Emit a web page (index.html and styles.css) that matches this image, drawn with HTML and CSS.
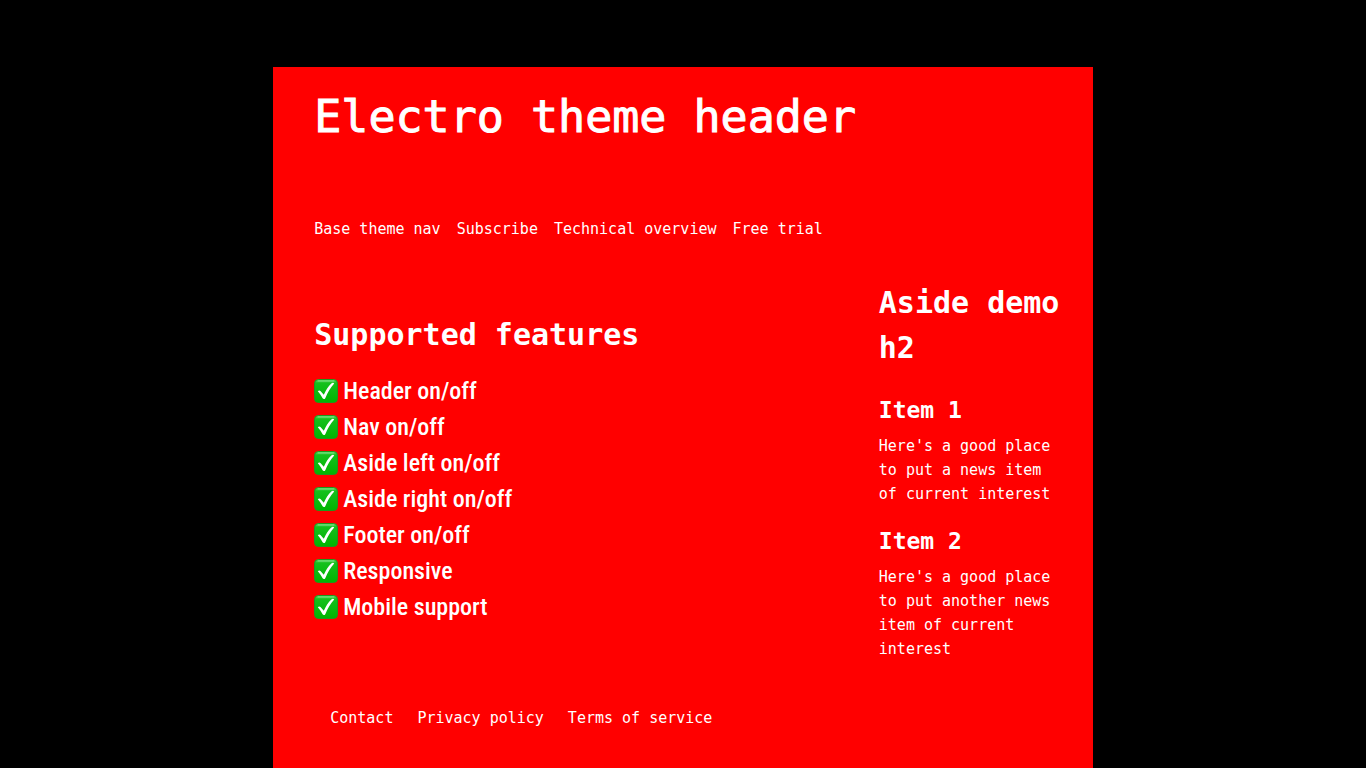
FILE: index.html
```html
<!DOCTYPE html>
<html lang="en">
<head>
    <meta charset="UTF-8">
    <meta name="viewport" content="width=device-width, initial-scale=1.0">
    <title>Electro theme</title>
    <link rel="stylesheet" href="styles.css">
</head>
<body>
    <!-- Check mark shared by the feature list -->
    <svg class="defs" width="0" height="0" aria-hidden="true">
        <defs>
            <linearGradient id="green" x1="0" y1="0" x2="0" y2="1">
                <stop offset="0" stop-color="#5fd866"/>
                <stop offset="0.16" stop-color="#14c01c"/>
                <stop offset="1" stop-color="#00b400"/>
            </linearGradient>
            <symbol id="check" viewBox="0 0 24 24">
                <rect x="0.5" y="0.5" width="23" height="23" rx="4" fill="url(#green)" stroke="#1c9b1c"/>
                <path d="M4 2H20" stroke="#7fe086" stroke-width="1" stroke-linecap="round"/>
                <path d="M3.800 12.200C4.600 11.200 5.900 11.200 6.700 12.200L9.800 15.800C11.600 11.700 14.400 7.200 17.300 4.500C18.200 3.700 19.600 3.600 20.200 4.500C16.500 8.700 13.500 13.400 11.400 18.900C10.800 20.400 9.300 20.500 8.600 19.300C7.300 16.900 5.900 14.500 3.800 12.200Z" fill="#fff"/>
            </symbol>
        </defs>
    </svg>

    <div class="container">
        <header>
            <h1>Electro theme header</h1>
        </header>
        <nav>
            <a href="#">Base theme nav</a>
            <a href="#">Subscribe</a>
            <a href="#">Technical overview</a>
            <a href="#">Free trial</a>
        </nav>
        <div class="content">
            <main>
                <h2>Supported features</h2>
                <ul class="features">
                    <li><svg><use href="#check"/></svg>Header on/off</li>
                    <li><svg><use href="#check"/></svg>Nav on/off</li>
                    <li><svg><use href="#check"/></svg>Aside left on/off</li>
                    <li><svg><use href="#check"/></svg>Aside right on/off</li>
                    <li><svg><use href="#check"/></svg>Footer on/off</li>
                    <li><svg><use href="#check"/></svg>Responsive</li>
                    <li><svg><use href="#check"/></svg>Mobile support</li>
                </ul>
            </main>
            <aside>
                <h2>Aside demo h2</h2>
                <h3>Item 1</h3>
                <p>Here's a good place to put a news item of current interest</p>
                <h3>Item 2</h3>
                <p>Here's a good place to put another news item of current interest</p>
            </aside>
        </div>
        <footer>
            <a href="#">Contact</a>
            <a href="#">Privacy policy</a>
            <a href="#">Terms of service</a>
        </footer>
    </div>
</body>
</html>
```
FILE: styles.css
```css
* {
    box-sizing: border-box;
}

body {
    margin: 0;
    padding-top: 67px;
    background-color: #000;
    color: #fff;
    font-family: "DejaVu Sans Mono", "Liberation Mono", monospace;
    font-size: 15px;
    line-height: 24px;
}

.defs {
    display: block;
}

.container {
    width: 60%;
    min-height: calc(100vh - 67px);
    margin: 0 auto;
    padding: 16px 30px 38px 41px;
    background-color: #f00;
}

h1, h2, h3, p {
    margin: 0;
}

h1 {
    font-size: 45px;
    font-weight: normal;
    line-height: 68px;
    -webkit-text-stroke: 1px #fff;
}

h2 {
    font-size: 30px;
    line-height: 45px;
}

h3 {
    margin-top: 18px;
    font-size: 23px;
    line-height: 34px;
}

a {
    color: #fff;
    text-decoration: none;
}

nav {
    display: flex;
    flex-wrap: wrap;
    gap: 16px;
    margin-top: 66px;
}

.content {
    display: flex;
    justify-content: space-between;
    margin-top: 39px;
}

main {
    padding-top: 32px;
}

.features {
    margin: 16px 0 0;
    padding: 0;
    list-style: none;
    font-family: "Roboto Condensed", "Liberation Sans Narrow", Roboto, sans-serif;
    font-size: 24px;
    font-weight: 500;
    line-height: 36px;
}

.features li {
    display: flex;
    align-items: center;
    gap: 5px;
}

.features svg {
    width: 24px;
    height: 24px;
}

aside {
    width: 184px;
}

aside h2 {
    margin-bottom: 23px;
}

aside p {
    margin-top: 7px;
}

footer {
    display: flex;
    flex-wrap: wrap;
    gap: 24px;
    margin-top: 45px;
    padding-left: 16px;
}

@media only screen and (max-width: 1100px) {
    .container {
        width: 100%;
    }
}

@media only screen and (max-width: 600px) {
    .content {
        flex-direction: column;
    }

    aside {
        width: auto;
        margin-top: 32px;
    }
}
```
